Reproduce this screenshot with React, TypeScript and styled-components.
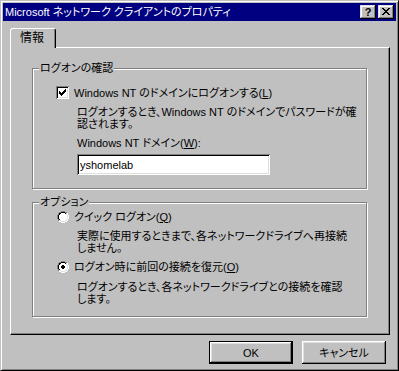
import styled, { createGlobalStyle } from 'styled-components';

const GlobalStyle = createGlobalStyle`
  html, body {
    margin: 0;
    padding: 0;
    background: #c0c0c0;
  }
  body {
    font-family: "Liberation Sans", "Noto Sans CJK JP", sans-serif;
    font-size: 11px;
    line-height: 12px;
    color: #000;
    font-feature-settings: "palt";
  }
  * {
    box-sizing: border-box;
  }
`;

// tiny pixel-art renderer for the classic 98 glyphs (check, radio, close)
type PixelMap = { rows: string[]; colors: Record<string, string> };

function PixelIcon({ rows, colors }: PixelMap) {
	const rects: JSX.Element[] = [];
	rows.forEach((row, y) => {
		let x = 0;
		while (x < row.length) {
			const c = row[x];
			let end = x;
			while (end < row.length && row[end] === c) end++;
			if (colors[c]) {
				rects.push(<rect key={`${x}-${y}`} x={x} y={y} width={end - x} height={1} fill={colors[c]} />);
			}
			x = end;
		}
	});
	return (
		<svg width={rows[0].length} height={rows.length} shapeRendering="crispEdges" style={{ display: 'block' }}>
			{rects}
		</svg>
	);
}

const CLOSE_GLYPH = ['##....##', '.##..##.', '..####..', '...##...', '..####..', '.##..##.', '##....##'];
const CHECK_GLYPH = ['......#', '.....##', '#...###', '##.###.', '#####..', '.###...', '..#....'];

const radioRows = (checked: boolean) => {
	const rows = [
		'....gggg....',
		'..ggkkkkgg..',
		'.gkkwwwwklh.',
		'.gkwwwwwwlh.',
		'gkwwwwwwwwlh',
		'gkwwwwwwwwlh',
		'gkwwwwwwwwlh',
		'gkwwwwwwwwlh',
		'.gkwwwwwwlh.',
		'.gllwwwwllh.',
		'..hhllllhh..',
		'....hhhh....',
	];
	if (!checked) return rows;
	const dot = ['.....dd.....', '....dddd....', '....dddd....', '.....dd.....'];
	return rows.map((row, y) => {
		if (y < 4 || y > 7) return row;
		const d = dot[y - 4];
		return row
			.split('')
			.map((ch, x) => (d[x] === 'd' ? 'd' : ch))
			.join('');
	});
};

const RADIO_COLORS = { g: '#808080', k: '#000', w: '#fff', h: '#fff', l: '#dfdfdf', d: '#000' };

// "(L)" style mnemonic, kept in the latin face so the brackets stay tight
const Mnemonic = ({ k }: { k: string }) => (
	<Accel>
		(<u>{k}</u>)
	</Accel>
);

function App() {
	return (
		<>
			<GlobalStyle />
			<Window>
				<TitleBar>
					<TitleText>Microsoft ネットワーク クライアントのプロパティ</TitleText>
					<CaptionButtons>
						<CaptionButton>?</CaptionButton>
						<CaptionButton>
							<PixelIcon rows={CLOSE_GLYPH} colors={{ '#': '#000' }} />
						</CaptionButton>
					</CaptionButtons>
				</TitleBar>

				<Body>
					<TabStrip>
						<Tab>情報</Tab>
					</TabStrip>
					<TabPanel>
						<Group $height={121} $padTop={17}>
							<Legend>ログオンの確認</Legend>
							<OptionRow>
								<Checkbox>
									<PixelIcon rows={CHECK_GLYPH} colors={{ '#': '#000' }} />
								</Checkbox>
								<span>
									Windows NT のドメインにログオンする<Mnemonic k="L" />
								</span>
							</OptionRow>
							<Note $top={7}>
								ログオンするとき、Windows NT のドメインでパスワードが確
								<br />
								認されます。
							</Note>
							<Note $top={7}>
								Windows NT ドメイン<Mnemonic k="W" />:
							</Note>
							<TextField defaultValue="yshomelab" />
						</Group>

						<Group $height={115} $padTop={7} $gap={13}>
							<Legend>オプション</Legend>
							<OptionRow>
								<Radio>
									<PixelIcon rows={radioRows(false)} colors={RADIO_COLORS} />
								</Radio>
								<span>
									クイック ログオン<Mnemonic k="Q" />
								</span>
							</OptionRow>
							<Note $top={7}>
								実際に使用するときまで、各ネットワークドライブへ再接続
								<br />
								しません。
							</Note>
							<OptionRow $top={6}>
								<Radio>
									<PixelIcon rows={radioRows(true)} colors={RADIO_COLORS} />
								</Radio>
								<span>
									ログオン時に前回の接続を復元<Mnemonic k="O" />
								</span>
							</OptionRow>
							<Note $top={8}>
								ログオンするとき、各ネットワークドライブとの接続を確認
								<br />
								します。
							</Note>
						</Group>
					</TabPanel>

					<ButtonRow>
						<Button $default>OK</Button>
						<Button>キャンセル</Button>
					</ButtonRow>
				</Body>
			</Window>
		</>
	);
}

export default App;

const Window = styled.div`
	width: 399px;
	height: 371px;
	display: flex;
	flex-direction: column;
	padding: 2px;
	background: #c0c0c0;
	border: 1px solid;
	border-color: #c0c0c0 #000 #000 #c0c0c0;
	box-shadow: inset 1px 1px #fff, inset -1px -1px #808080;
`;

const TitleBar = styled.div`
	height: 18px;
	flex-shrink: 0;
	display: flex;
	align-items: center;
	justify-content: space-between;
	padding: 0 2px;
	background: #000080;
	color: #fff;
`;

const TitleText = styled.span`
	white-space: nowrap;
`;

const CaptionButtons = styled.div`
	display: flex;
	gap: 2px;
`;

const CaptionButton = styled.div`
	width: 16px;
	height: 14px;
	display: flex;
	align-items: center;
	justify-content: center;
	padding-bottom: 1px;
	background: #c0c0c0;
	color: #000;
	font-family: "Liberation Sans", sans-serif;
	font-weight: bold;
	font-size: 11px;
	box-shadow: inset -1px -1px #000, inset 1px 1px #dfdfdf, inset -2px -2px #808080, inset 2px 2px #fff;
`;

const Body = styled.div`
	flex: 1;
	display: flex;
	flex-direction: column;
	padding: 7px 6px 0 7px;
`;

const TabStrip = styled.div`
	display: flex;
	height: 19px;
`;

const Tab = styled.div`
	position: relative;
	z-index: 1;
	width: 46px;
	height: 20px;
	display: flex;
	align-items: center;
	justify-content: center;
	padding: 0 2px 1px 0;
	background: #c0c0c0;
	border: 1px solid;
	border-bottom: none;
	border-color: #fff #000 #000 #fff;
	border-radius: 3px 3px 0 0;
	box-shadow: inset -1px 0 #808080;
	font-size: 12px;
`;

const TabPanel = styled.div`
	height: 288px;
	display: flex;
	flex-direction: column;
	padding: 20px 0 0 21px;
	border: 1px solid;
	border-color: #fff #000 #000 #fff;
	box-shadow: inset -1px -1px #808080;
`;

const Group = styled.div<{ $height: number; $padTop: number; $gap?: number }>`
	position: relative;
	width: 335px;
	height: ${({ $height }) => $height}px;
	margin-top: ${({ $gap }) => $gap ?? 0}px;
	display: flex;
	flex-direction: column;
	align-items: flex-start;
	padding: ${({ $padTop }) => $padTop}px 0 0 23px;
	border: 1px solid #808080;
	box-shadow: inset 1px 1px #fff, 1px 1px #fff;
`;

const Legend = styled.span`
	position: absolute;
	top: -7px;
	left: 6px;
	padding: 0 1px;
	background: #c0c0c0;
	white-space: nowrap;
`;

const OptionRow = styled.div<{ $top?: number }>`
	display: flex;
	align-items: center;
	gap: 5px;
	height: 13px;
	margin-top: ${({ $top }) => $top ?? 0}px;
	white-space: nowrap;
`;

const Accel = styled.span`
	font-family: "Liberation Sans", sans-serif;
	font-feature-settings: normal;
`;

const Checkbox = styled.span`
	width: 13px;
	height: 13px;
	display: flex;
	align-items: center;
	justify-content: center;
	background: #fff;
	box-shadow: inset 1px 1px #808080, inset -1px -1px #fff, inset 2px 2px #000, inset -2px -2px #dfdfdf;
`;

const Radio = styled.span`
	margin-left: 1px;
`;

const Note = styled.div<{ $top: number }>`
	margin: ${({ $top }) => $top}px 0 0 21px;
	white-space: nowrap;
`;

const TextField = styled.input`
	width: 193px;
	height: 21px;
	margin: 5px 0 0 21px;
	padding: 0 3px;
	font: inherit;
	font-feature-settings: "palt";
	color: #000;
	background: #fff;
	border: none;
	outline: none;
	box-shadow: inset 1px 1px #808080, inset -1px -1px #fff, inset 2px 2px #000, inset -2px -2px #dfdfdf;
`;

const ButtonRow = styled.div`
	display: flex;
	justify-content: flex-end;
	gap: 9px;
	margin-top: 6px;
	padding-right: 4px;
`;

const Button = styled.button<{ $default?: boolean }>`
	width: 84px;
	height: 23px;
	padding: 0;
	font: inherit;
	font-feature-settings: "palt";
	color: #000;
	background: #c0c0c0;
	border: none;
	box-shadow: ${({ $default }) =>
		$default
			? 'inset 0 0 0 1px #000, inset -2px -2px #000, inset 2px 2px #fff, inset -3px -3px #808080, inset 3px 3px #dfdfdf'
			: 'inset -1px -1px #000, inset 1px 1px #fff, inset -2px -2px #808080, inset 2px 2px #dfdfdf'};
`;
